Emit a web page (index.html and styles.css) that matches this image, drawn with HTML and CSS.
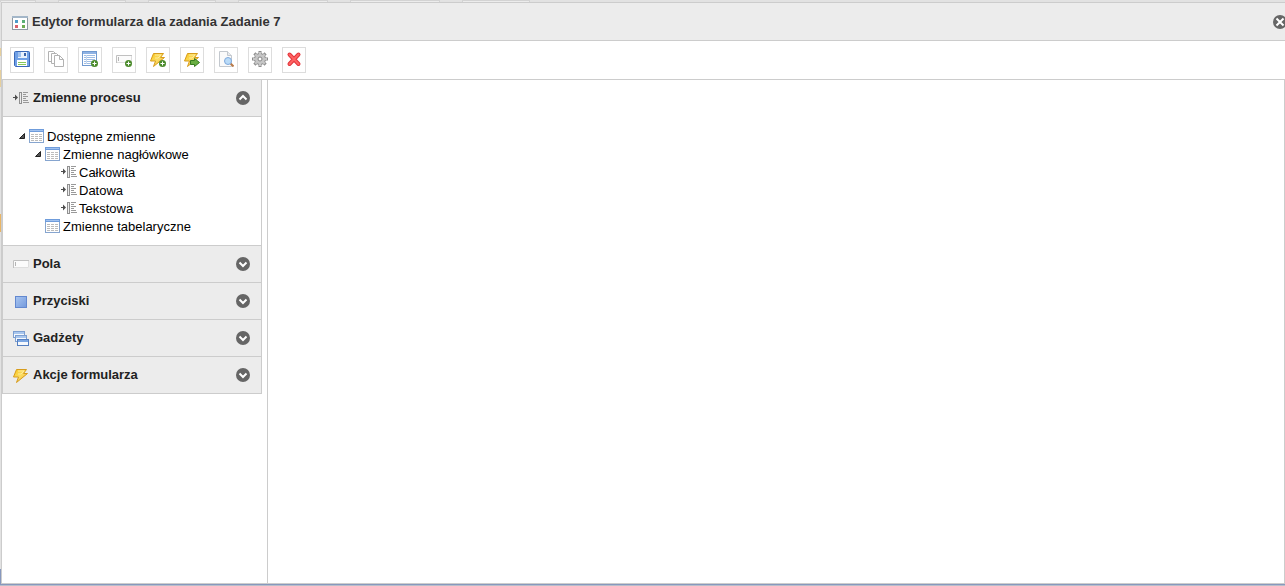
FILE: index.html
```html
<!DOCTYPE html>
<html lang="pl">
<head>
    <meta charset="UTF-8">
    <meta name="viewport" content="width=device-width, initial-scale=1.0">
    <title>Edytor formularza</title>
    <link rel="stylesheet" href="styles.css">
</head>
<body>
    <svg class="symbols" aria-hidden="true">
        <defs>
            <linearGradient id="boltFill" x1="0" y1="0" x2="1" y2="1">
                <stop offset="0" stop-color="#f9c71c"/>
                <stop offset="0.5" stop-color="#fbdc62"/>
                <stop offset="1" stop-color="#eda51c"/>
            </linearGradient>
            <linearGradient id="blueFill" x1="0" y1="0" x2="1" y2="1">
                <stop offset="0" stop-color="#a9c6f1"/>
                <stop offset="1" stop-color="#7399dc"/>
            </linearGradient>
        </defs>
        <symbol id="i-form" viewBox="0 0 16 16">
            <rect x="0.5" y="1.5" width="15" height="13" fill="#fff" stroke="#8e99a3"/>
            <path d="M0 2h16" stroke="#a3b6c8" stroke-width="2"/>
            <path d="M3 5h3v3H3z" fill="#4d9bc9"/>
            <path d="M10 5h3v3h-3z" fill="#5bb078"/>
            <path d="M3 10h3v3H3z" fill="#d9616b"/>
            <path d="M10 10h3v3h-3z" fill="#6dad52"/>
        </symbol>
        <symbol id="i-save" viewBox="0 0 16 16">
            <path d="M0.5 1.5q0-1 1-1h13q1 0 1 1v14h-14l-1-1z" fill="#6fa0e6" stroke="#3a68b8"/>
            <path d="M4 1h9v6H4z" fill="#e8f1fc"/>
            <path d="M4 1h3v5H4z" fill="#9dc0ee"/>
            <path d="M10 2h2v3h-2z" fill="#3a62a8"/>
            <path d="M3 9h10v6H3z" fill="#fff"/>
            <path d="M4 11.5h8M4 13.5h8" stroke="#86c95a"/>
        </symbol>
        <symbol id="i-copy" viewBox="0 0 16 16">
            <g fill="#fff" stroke="#b2b2b2">
                <path d="M0.5 0.5h5l3 3v7h-8z"/>
                <path d="M3.5 2.5h5l3 3v7h-8z"/>
                <path d="M6.5 4.5h5l4 4v7h-9z"/>
                <path d="M11.5 4.5v4h4" fill="none"/>
            </g>
        </symbol>
        <symbol id="i-plus" viewBox="0 0 16 16">
            <circle cx="12.5" cy="12.5" r="3.5" fill="#4b8b2c"/>
            <path d="M12.5 10.5v4M10.5 12.5h4" stroke="#fff"/>
        </symbol>
        <symbol id="i-table-add" viewBox="0 0 16 16">
            <rect x="0.5" y="0.5" width="14" height="14" fill="#fff" stroke="#7099cf"/>
            <path d="M1 2h13" stroke="#8fb3e4" stroke-width="2"/>
            <path d="M2 4.5h11M2 6.5h11M2 8.5h11M2 10.5h11M2 12.5h11" stroke="#9fbde4"/>
            <path d="M4.5 4v9" stroke="#c7d9ef"/>
            <use href="#i-plus"/>
        </symbol>
        <symbol id="i-field" viewBox="0 0 16 16">
            <path d="M0 4h16v8H0z" fill="#fbfbfb"/>
            <path d="M0.5 12V4.5H16" fill="none" stroke="#c0c0c0"/>
            <path d="M1 11.5h14.5V5" fill="none" stroke="#dedede"/>
            <path d="M2.5 6v4" stroke="#b5b5b5"/>
        </symbol>
        <symbol id="i-field-add" viewBox="0 0 16 16">
            <use href="#i-field"/>
            <use href="#i-plus"/>
        </symbol>
        <symbol id="i-bolt" viewBox="0 0 16 16">
            <path d="M3.5 2.5h10l-3 4h4l-11 9 2-5.5h-5z" fill="url(#boltFill)" stroke="#d79c1c"/>
            <path d="M5 4h6l-3 3H5" fill="none" stroke="#fdeb9a"/>
        </symbol>
        <symbol id="i-bolt-add" viewBox="0 0 16 16">
            <use href="#i-bolt"/>
            <use href="#i-plus"/>
        </symbol>
        <symbol id="i-bolt-go" viewBox="0 0 16 16">
            <use href="#i-bolt"/>
            <path d="M6.5 9.5h4v-2l5 4-5 4v-2h-4z" fill="#69ae42" stroke="#377c20"/>
        </symbol>
        <symbol id="i-preview" viewBox="0 0 16 16">
            <path d="M1.5 0.5h8l4 4v11h-12z" fill="#fafafa" stroke="#c3c8ce"/>
            <path d="M9.5 0.5v4h4" fill="#e8eaed" stroke="#c3c8ce"/>
            <path d="M12.5 12.5l3 3" stroke="#b97b4a" stroke-width="2"/>
            <circle cx="10" cy="10" r="3.5" fill="#b9dbf8" stroke="#7fa9dc"/>
        </symbol>
        <symbol id="i-gear" viewBox="0 0 16 16">
            <path d="M8 0v16M0 8h16M2.4 2.4l11.2 11.2M13.6 2.4L2.4 13.6" stroke="#8c8c8c" stroke-width="3"/>
            <circle cx="8" cy="8" r="5.5" fill="#c6c6c6" stroke="#8c8c8c"/>
            <path d="M8 1v14M1 8h14M3.2 3.2l9.6 9.6M12.8 3.2l-9.6 9.6" stroke="#c6c6c6" stroke-width="2"/>
            <circle cx="8" cy="8" r="2" fill="#fff" stroke="#858585"/>
        </symbol>
        <symbol id="i-delete" viewBox="0 0 16 16">
            <path d="M3.5 3.5l9 9.5M12.5 3.5l-9 9.5" stroke="#e2353b" stroke-width="4" stroke-linecap="round"/>
            <path d="M3.5 3.5l9 9.5M12.5 3.5l-9 9.5" stroke="#ff6262" stroke-width="2" stroke-linecap="round"/>
        </symbol>
        <symbol id="i-variable" viewBox="0 0 16 16">
            <path d="M0 7.5h4" stroke="#4d4d4d"/>
            <path d="M2 4.5l3 3-3 3z" fill="#4d4d4d"/>
            <rect x="6.5" y="2.5" width="2" height="11" fill="#ececec" stroke="#909090"/>
            <path d="M10 2.5h5M10 4.5h3M10 6.5h5M10 8.5h3M10 10.5h5M10 12.5h6" stroke="#999"/>
        </symbol>
        <symbol id="i-table" viewBox="0 0 16 16">
            <rect x="0.5" y="1.5" width="14" height="13" fill="#fff" stroke="#86a5cf"/>
            <path d="M0 2.5h15" stroke="#6f9cdb" stroke-width="3"/>
            <path d="M1 2.5h13" stroke="#9fc1f0"/>
            <path d="M2 6.5h11M2 8.5h11M2 10.5h11M2 12.5h11" stroke="#bcbcbc" stroke-dasharray="3 1"/>
        </symbol>
        <symbol id="i-button" viewBox="0 0 16 16">
            <rect x="2.5" y="3.5" width="11" height="11" fill="url(#blueFill)" stroke="#6388cf"/>
        </symbol>
        <symbol id="i-windows" viewBox="0 0 16 16">
            <g fill="#f6f9fd" stroke="#7d9fd0">
                <rect x="0.5" y="1.5" width="11" height="6"/>
                <path d="M1 3h10" stroke="#a9c7ee" stroke-width="2"/>
                <rect x="2.5" y="5.5" width="11" height="6"/>
                <path d="M3 7h10" stroke="#a9c7ee" stroke-width="2"/>
                <rect x="4.5" y="9.5" width="11" height="6" stroke="#557fc0"/>
                <path d="M5 11h10" stroke="#7ba6e2" stroke-width="2"/>
            </g>
        </symbol>
        <symbol id="i-down" viewBox="0 0 14 14">
            <circle cx="7" cy="7" r="7" fill="#666"/>
            <path d="M3.5 5.5L7 9l3.5-3.5" fill="none" stroke="#fff" stroke-width="2"/>
        </symbol>
        <symbol id="i-up" viewBox="0 0 14 14">
            <circle cx="7" cy="7" r="7" fill="#666"/>
            <path d="M3.5 8.5L7 5l3.5 3.5" fill="none" stroke="#fff" stroke-width="2"/>
        </symbol>
        <symbol id="i-close" viewBox="0 0 14 14">
            <circle cx="7" cy="7" r="7" fill="#666"/>
            <path d="M3.5 3.5l7 7M10.5 3.5l-7 7" stroke="#fff" stroke-width="2"/>
        </symbol>
        <symbol id="i-expanded" viewBox="0 0 8 8">
            <path d="M6.5 1.5v5h-5z" fill="#555" stroke="#222"/>
        </symbol>
    </svg>

    <!-- Zakładki strony pod oknem -->
    <div class="page-tabs">
        <span class="tab tab-first"></span>
        <span class="tab"></span>
        <span class="tab"></span>
        <span class="tab tab-wide"></span>
        <span class="tab tab-wide"></span>
        <span class="tab"></span>
    </div>

    <div class="window">
        <header class="window-header">
            <svg class="icon"><use href="#i-form"/></svg>
            <h1>Edytor formularza dla zadania Zadanie 7</h1>
            <button class="tool" type="button" aria-label="Zamknij"><svg><use href="#i-close"/></svg></button>
        </header>

        <div class="toolbar">
            <button type="button" title="Zapisz"><svg class="icon"><use href="#i-save"/></svg></button>
            <button type="button" title="Kopiuj"><svg class="icon"><use href="#i-copy"/></svg></button>
            <button type="button" title="Dodaj tabelę"><svg class="icon"><use href="#i-table-add"/></svg></button>
            <button type="button" title="Dodaj pole"><svg class="icon"><use href="#i-field-add"/></svg></button>
            <button type="button" title="Dodaj akcję"><svg class="icon"><use href="#i-bolt-add"/></svg></button>
            <button type="button" title="Wykonaj akcję"><svg class="icon"><use href="#i-bolt-go"/></svg></button>
            <button type="button" title="Podgląd"><svg class="icon"><use href="#i-preview"/></svg></button>
            <button type="button" title="Ustawienia"><svg class="icon"><use href="#i-gear"/></svg></button>
            <button type="button" title="Usuń"><svg class="icon"><use href="#i-delete"/></svg></button>
        </div>

        <div class="content">
            <aside class="sidebar">
                <div class="accordion">
                    <section>
                        <button class="panel-header" type="button" aria-expanded="true">
                            <svg class="icon"><use href="#i-variable"/></svg>
                            <span>Zmienne procesu</span>
                            <svg class="arrow"><use href="#i-up"/></svg>
                        </button>
                        <ul class="tree">
                            <li>
                                <div class="node"><svg class="expander"><use href="#i-expanded"/></svg><svg class="icon"><use href="#i-table"/></svg><span>Dostępne zmienne</span></div>
                                <ul>
                                    <li>
                                        <div class="node"><svg class="expander"><use href="#i-expanded"/></svg><svg class="icon"><use href="#i-table"/></svg><span>Zmienne nagłówkowe</span></div>
                                        <ul>
                                            <li><div class="node leaf"><svg class="icon"><use href="#i-variable"/></svg><span>Całkowita</span></div></li>
                                            <li><div class="node leaf"><svg class="icon"><use href="#i-variable"/></svg><span>Datowa</span></div></li>
                                            <li><div class="node leaf"><svg class="icon"><use href="#i-variable"/></svg><span>Tekstowa</span></div></li>
                                        </ul>
                                    </li>
                                    <li><div class="node leaf"><svg class="icon"><use href="#i-table"/></svg><span>Zmienne tabelaryczne</span></div></li>
                                </ul>
                            </li>
                        </ul>
                    </section>
                    <section>
                        <button class="panel-header" type="button" aria-expanded="false">
                            <svg class="icon"><use href="#i-field"/></svg>
                            <span>Pola</span>
                            <svg class="arrow"><use href="#i-down"/></svg>
                        </button>
                    </section>
                    <section>
                        <button class="panel-header" type="button" aria-expanded="false">
                            <svg class="icon"><use href="#i-button"/></svg>
                            <span>Przyciski</span>
                            <svg class="arrow"><use href="#i-down"/></svg>
                        </button>
                    </section>
                    <section>
                        <button class="panel-header" type="button" aria-expanded="false">
                            <svg class="icon"><use href="#i-windows"/></svg>
                            <span>Gadżety</span>
                            <svg class="arrow"><use href="#i-down"/></svg>
                        </button>
                    </section>
                    <section>
                        <button class="panel-header" type="button" aria-expanded="false">
                            <svg class="icon"><use href="#i-bolt"/></svg>
                            <span>Akcje formularza</span>
                            <svg class="arrow"><use href="#i-down"/></svg>
                        </button>
                    </section>
                </div>
            </aside>
            <main class="canvas"></main>
        </div>
    </div>
    <div class="page-footer"></div>
</body>
</html>
```
FILE: styles.css
```css
* {
    box-sizing: border-box;
}
body {
    margin: 0;
    min-height: 100vh;
    display: flex;
    flex-direction: column;
    overflow-x: hidden;
    font-family: "Liberation Sans", Arial, sans-serif;
    font-size: 13px;
    color: #000;
    background-color: #e2e2e2;
    background-image: linear-gradient(#e9b565, #e9b565), linear-gradient(#e6cf9c, #e6cf9c), linear-gradient(#e6cf9c, #e6cf9c), linear-gradient(#8798be, #8798be);
    background-position: 0 214px, 0 48px, 0 70px, 0 100%;
    background-size: 1px 18px, 1px 8px, 1px 17px, 1px 17px;
    background-repeat: no-repeat;
}
h1, ul {
    margin: 0;
    padding: 0;
}
button {
    font: inherit;
    color: inherit;
    cursor: pointer;
}
svg {
    display: block;
    flex: none;
}
.symbols {
    position: absolute;
    width: 0;
    height: 0;
}
.icon {
    width: 16px;
    height: 16px;
}

/* page under the window */
.page-tabs {
    display: flex;
    gap: 22px;
    height: 2px;
}
.tab {
    width: 68px;
    border: 1px solid #d3d3d3;
    border-bottom: 0;
    background: #ececec;
}
.tab-first {
    width: 36px;
}
.tab-wide {
    width: 90px;
}
.page-footer {
    height: 2px;
    background: #8798be;
    border-bottom: 1px solid #b9bec9;
}

/* window */
.window {
    flex: 1;
    display: flex;
    flex-direction: column;
    margin-left: 1px;
    border: 1px solid #ccc;
    border-right: 0;
    background: #fff;
    overflow: hidden;
}
.window-header {
    display: flex;
    align-items: center;
    height: 38px;
    padding-left: 10px;
    background: #ececec;
    border-bottom: 1px solid #ccc;
}
.window-header .icon {
    margin-top: 2px;
}
.window-header h1 {
    flex: 1;
    margin-left: 4px;
    font-size: 13px;
    color: #333;
}
.tool {
    width: 14px;
    height: 14px;
    margin-right: -2px;
    padding: 0;
    border: 0;
    background: none;
}
.tool svg, .arrow {
    width: 14px;
    height: 14px;
}
.toolbar {
    display: flex;
    gap: 10px;
    padding: 6px 8px;
}
.toolbar button {
    display: flex;
    justify-content: center;
    width: 24px;
    height: 26px;
    padding: 3px 0 0;
    border: 1px solid #ddd;
    background: #fff;
}
.content {
    flex: 1;
    display: flex;
    gap: 5px;
    border-top: 1px solid #ccc;
}
.sidebar {
    width: 260px;
}
.accordion {
    border: 1px solid #ccc;
    border-top: 0;
}
.accordion section + section {
    border-top: 1px solid #ccc;
}
.panel-header {
    display: flex;
    align-items: center;
    gap: 4px;
    width: 100%;
    height: 36px;
    padding: 0 11px 0 10px;
    border: 0;
    background: #ececec;
    color: #222;
    font-weight: bold;
    text-align: left;
}
.panel-header span {
    flex: 1;
    padding-bottom: 2px;
}
.tree {
    padding: 10px 0 10px 15px;
    border-top: 1px solid #ccc;
    list-style: none;
}
.tree ul {
    padding-left: 16px;
    list-style: none;
}
.node {
    display: flex;
    align-items: center;
    height: 18px;
    line-height: 16px;
}
.node span {
    padding-top: 2px;
    margin-left: 2px;
}
.expander {
    width: 8px;
    height: 8px;
    margin-right: 3px;
}
.leaf {
    padding-left: 11px;
}
.canvas {
    flex: 1;
    border: 1px solid #ccc;
    border-width: 0 1px;
}
```
